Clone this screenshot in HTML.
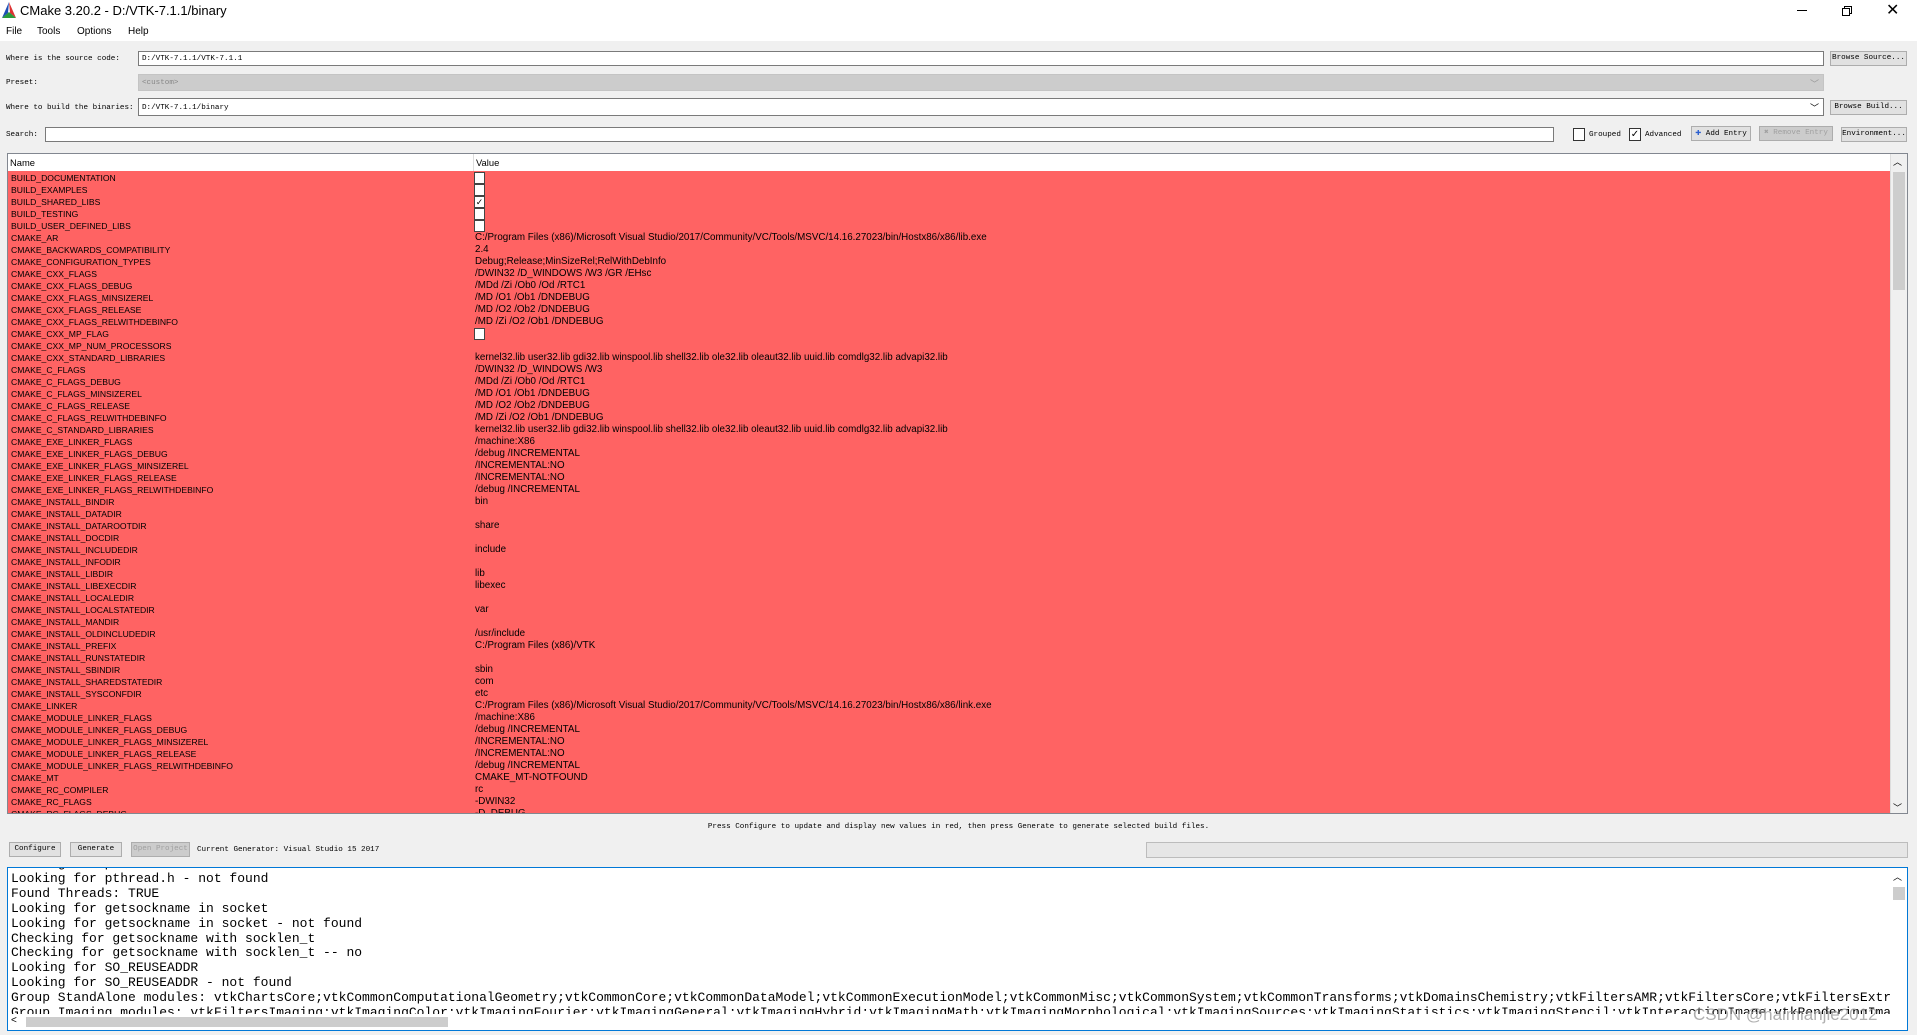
<!DOCTYPE html>
<html><head><meta charset="utf-8">
<style>
*{margin:0;padding:0;box-sizing:border-box}
body{width:1917px;height:1035px;background:#f0f0f0;position:relative;overflow:hidden;font-family:"Liberation Sans",sans-serif}
.a{position:absolute}
.lbl{font-family:"Liberation Mono",monospace;font-size:7.6px;color:#000;white-space:nowrap}
.fld{background:#fff;border:1px solid #7a7a7a}
.btn{background:#e1e1e1;border:1px solid #adadad;font-family:"Liberation Mono",monospace;font-size:7.6px;text-align:center;white-space:nowrap}
.row{position:absolute;left:0;height:12px;font-size:8.6px;line-height:12px;white-space:nowrap;color:#000}
.v{font-size:9.8px}
.cb{position:absolute;width:11px;height:12px;background:#fff;border:1px solid #444}
#tbl{left:7px;top:153px;width:1901px;height:661px;background:#ff6363;border:1px solid #828790;overflow:hidden}
pre{font-family:"Liberation Mono",monospace;font-size:13px;line-height:14.9px;color:#000}
</style></head><body>
<div class="a" style="left:0;top:0;width:1917px;height:41px;background:#fff"></div>
<svg class="a" style="left:2px;top:2px" width="14" height="16" viewBox="0 0 14 16"><polygon points="7,0 0,16 6,11" fill="#1e4fb5"/><polygon points="7,0 14,16 8,11" fill="#d33"/><polygon points="0,16 14,16 7,10" fill="#2a9a3a"/></svg>
<div class="a" style="left:20px;top:3px;font-size:13px">CMake 3.20.2 - D:/VTK-7.1.1/binary</div>
<div class="a" style="left:1797px;top:10px;width:10px;height:1px;background:#000"></div>
<div class="a" style="left:1844px;top:6px;width:8px;height:8px;border:1px solid #000;background:#fff"></div>
<div class="a" style="left:1842px;top:8px;width:8px;height:8px;border:1px solid #000;background:#fff"></div>
<div class="a" style="left:1886px;top:0px;font-size:16px;font-weight:300">✕</div>
<div class="a" style="left:6px;top:26px;font-size:10px">File</div>
<div class="a" style="left:37px;top:26px;font-size:10px">Tools</div>
<div class="a" style="left:77px;top:26px;font-size:10px">Options</div>
<div class="a" style="left:128px;top:26px;font-size:10px">Help</div>

<div class="a lbl" style="left:6px;top:55px">Where is the source code:</div>
<div class="a fld lbl" style="left:138px;top:51px;width:1686px;height:15px;padding:3px 3px">D:/VTK-7.1.1/VTK-7.1.1</div>
<div class="a btn" style="left:1830px;top:51px;width:77px;height:15px;line-height:13px">Browse Source...</div>
<div class="a lbl" style="left:6px;top:79px">Preset:</div>
<div class="a lbl" style="left:138px;top:74px;width:1686px;height:17px;background:#ccc;border:1px solid #c4c4c4;padding:4px 3px;color:#888">&lt;custom&gt;</div>
<div class="a" style="left:1810px;top:77px;color:#999;font-size:9px">﹀</div>
<div class="a lbl" style="left:6px;top:104px">Where to build the binaries:</div>
<div class="a fld lbl" style="left:138px;top:98px;width:1686px;height:18px;padding:5px 3px">D:/VTK-7.1.1/binary</div>
<div class="a" style="left:1810px;top:101px;font-size:9px">﹀</div>
<div class="a btn" style="left:1830px;top:100px;width:77px;height:15px;line-height:13px">Browse Build...</div>
<div class="a lbl" style="left:6px;top:131px">Search:</div>
<div class="a fld" style="left:45px;top:127px;width:1509px;height:15px"></div>
<div class="a" style="left:1573px;top:128px;width:12px;height:13px;border:1px solid #333;background:#fff"></div>
<div class="a lbl" style="left:1589px;top:131px">Grouped</div>
<div class="a" style="left:1629px;top:128px;width:12px;height:13px;border:1px solid #333;background:#fff;font-size:10px;line-height:11px;text-align:center">✓</div>
<div class="a lbl" style="left:1645px;top:131px">Advanced</div>
<div class="a btn" style="left:1691px;top:126px;width:60px;height:15px;line-height:13px"><span style="color:#2b5fd0;font-weight:bold;font-size:10px">✚</span> Add Entry</div>
<div class="a btn" style="left:1759px;top:126px;width:74px;height:15px;line-height:13px;color:#a0a0a0;background:#ccc">✖ Remove Entry</div>
<div class="a btn" style="left:1841px;top:127px;width:66px;height:15px;line-height:13px">Environment...</div>

<div class="a" id="tbl">
<div class="a" style="left:0;top:0;width:1882px;height:17px;background:#fff;font-size:9.4px;line-height:17px"><span style="position:absolute;left:2px">Name</span><span style="position:absolute;left:465px;border-left:1px solid #ddd;padding-left:2px;height:17px">Value</span></div>
<div class="a" style="left:1882px;top:0;width:18px;height:660px;background:#f0f0f0;border-left:1px solid #ddd"></div>
<div class="a" style="left:1885px;top:1px;font-size:9px">︿</div>
<div class="a" style="left:1885px;top:18px;width:12px;height:118px;background:#cdcdcd"></div>
<div class="a" style="left:1885px;top:647px;font-size:9px">﹀</div>
<div id="rows" class="a" style="left:0;top:18px;width:1882px"></div>
</div>

<div class="a lbl" style="left:0;width:1917px;top:823px;text-align:center">Press Configure to update and display new values in red, then press Generate to generate selected build files.</div>
<div class="a btn" style="left:9px;top:842px;width:52px;height:15px;line-height:13px">Configure</div>
<div class="a btn" style="left:70px;top:842px;width:52px;height:15px;line-height:13px">Generate</div>
<div class="a btn" style="left:131px;top:842px;width:59px;height:15px;line-height:13px;color:#a0a0a0;background:#ccc">Open Project</div>
<div class="a lbl" style="left:197px;top:846px">Current Generator: Visual Studio 15 2017</div>
<div class="a" style="left:1146px;top:842px;width:762px;height:16px;background:#e6e6e6;border:1px solid #bcbcbc"></div>

<div class="a" style="left:7px;top:867px;width:1901px;height:164px;background:#fff;border:1px solid #0078d7;overflow:hidden">
<pre class="a" style="left:3px;top:-11px">Looking for pthread.h
Looking for pthread.h - not found
Found Threads: TRUE
Looking for getsockname in socket
Looking for getsockname in socket - not found
Checking for getsockname with socklen_t
Checking for getsockname with socklen_t -- no
Looking for SO_REUSEADDR
Looking for SO_REUSEADDR - not found
Group StandAlone modules: vtkChartsCore;vtkCommonComputationalGeometry;vtkCommonCore;vtkCommonDataModel;vtkCommonExecutionModel;vtkCommonMisc;vtkCommonSystem;vtkCommonTransforms;vtkDomainsChemistry;vtkFiltersAMR;vtkFiltersCore;vtkFiltersExtr
Group Imaging modules: vtkFiltersImaging;vtkImagingColor;vtkImagingFourier;vtkImagingGeneral;vtkImagingHybrid;vtkImagingMath;vtkImagingMorphological;vtkImagingSources;vtkImagingStatistics;vtkImagingStencil;vtkInteractionImage;vtkRenderingImage</pre>
<div class="a" style="left:0;top:146px;width:1899px;height:17px;background:#fff"></div>
<div class="a" style="left:3px;top:147px;font-size:10px">&lt;</div>
<div class="a" style="left:18px;top:149px;width:422px;height:10px;background:#cdcdcd"></div>
<div class="a" style="left:1882px;top:0;width:17px;height:146px;background:#fff"></div>
<div class="a" style="left:1885px;top:2px;font-size:9px">︿</div>
<div class="a" style="left:1885px;top:19px;width:12px;height:13px;background:#cdcdcd"></div>
</div>
<div class="a" style="left:1693px;top:1005px;font-size:17px;color:rgba(150,150,150,.75)">CSDN @haimianjie2012</div>

<script>
var C="C:/Program Files (x86)/Microsoft Visual Studio/2017/Community/VC/Tools/MSVC/14.16.27023/bin/Hostx86/x86/";
var L="kernel32.lib user32.lib gdi32.lib winspool.lib shell32.lib ole32.lib oleaut32.lib uuid.lib comdlg32.lib advapi32.lib";
var d=[["BUILD_DOCUMENTATION",0],["BUILD_EXAMPLES",0],["BUILD_SHARED_LIBS",1],["BUILD_TESTING",0],["BUILD_USER_DEFINED_LIBS",0],
["CMAKE_AR",C+"lib.exe"],["CMAKE_BACKWARDS_COMPATIBILITY","2.4"],["CMAKE_CONFIGURATION_TYPES","Debug;Release;MinSizeRel;RelWithDebInfo"],
["CMAKE_CXX_FLAGS","/DWIN32 /D_WINDOWS /W3 /GR /EHsc"],["CMAKE_CXX_FLAGS_DEBUG","/MDd /Zi /Ob0 /Od /RTC1"],["CMAKE_CXX_FLAGS_MINSIZEREL","/MD /O1 /Ob1 /DNDEBUG"],
["CMAKE_CXX_FLAGS_RELEASE","/MD /O2 /Ob2 /DNDEBUG"],["CMAKE_CXX_FLAGS_RELWITHDEBINFO","/MD /Zi /O2 /Ob1 /DNDEBUG"],["CMAKE_CXX_MP_FLAG",0],
["CMAKE_CXX_MP_NUM_PROCESSORS",""],["CMAKE_CXX_STANDARD_LIBRARIES",L],["CMAKE_C_FLAGS","/DWIN32 /D_WINDOWS /W3"],["CMAKE_C_FLAGS_DEBUG","/MDd /Zi /Ob0 /Od /RTC1"],
["CMAKE_C_FLAGS_MINSIZEREL","/MD /O1 /Ob1 /DNDEBUG"],["CMAKE_C_FLAGS_RELEASE","/MD /O2 /Ob2 /DNDEBUG"],["CMAKE_C_FLAGS_RELWITHDEBINFO","/MD /Zi /O2 /Ob1 /DNDEBUG"],
["CMAKE_C_STANDARD_LIBRARIES",L],["CMAKE_EXE_LINKER_FLAGS","/machine:X86"],["CMAKE_EXE_LINKER_FLAGS_DEBUG","/debug /INCREMENTAL"],
["CMAKE_EXE_LINKER_FLAGS_MINSIZEREL","/INCREMENTAL:NO"],["CMAKE_EXE_LINKER_FLAGS_RELEASE","/INCREMENTAL:NO"],["CMAKE_EXE_LINKER_FLAGS_RELWITHDEBINFO","/debug /INCREMENTAL"],
["CMAKE_INSTALL_BINDIR","bin"],["CMAKE_INSTALL_DATADIR",""],["CMAKE_INSTALL_DATAROOTDIR","share"],["CMAKE_INSTALL_DOCDIR",""],["CMAKE_INSTALL_INCLUDEDIR","include"],
["CMAKE_INSTALL_INFODIR",""],["CMAKE_INSTALL_LIBDIR","lib"],["CMAKE_INSTALL_LIBEXECDIR","libexec"],["CMAKE_INSTALL_LOCALEDIR",""],["CMAKE_INSTALL_LOCALSTATEDIR","var"],
["CMAKE_INSTALL_MANDIR",""],["CMAKE_INSTALL_OLDINCLUDEDIR","/usr/include"],["CMAKE_INSTALL_PREFIX","C:/Program Files (x86)/VTK"],["CMAKE_INSTALL_RUNSTATEDIR",""],
["CMAKE_INSTALL_SBINDIR","sbin"],["CMAKE_INSTALL_SHAREDSTATEDIR","com"],["CMAKE_INSTALL_SYSCONFDIR","etc"],["CMAKE_LINKER",C+"link.exe"],
["CMAKE_MODULE_LINKER_FLAGS","/machine:X86"],["CMAKE_MODULE_LINKER_FLAGS_DEBUG","/debug /INCREMENTAL"],["CMAKE_MODULE_LINKER_FLAGS_MINSIZEREL","/INCREMENTAL:NO"],
["CMAKE_MODULE_LINKER_FLAGS_RELEASE","/INCREMENTAL:NO"],["CMAKE_MODULE_LINKER_FLAGS_RELWITHDEBINFO","/debug /INCREMENTAL"],["CMAKE_MT","CMAKE_MT-NOTFOUND"],
["CMAKE_RC_COMPILER","rc"],["CMAKE_RC_FLAGS","-DWIN32"],["CMAKE_RC_FLAGS_DEBUG","-D_DEBUG"]];
var h="";
d.forEach(function(r,i){var t=i*12;h+='<div class="row" style="top:'+t+'px;left:3px">'+r[0]+'</div>';
if(typeof r[1]=="number"){h+='<div class="cb" style="top:'+t+'px;left:466px;font-size:9px;line-height:10px;text-align:center">'+(r[1]?'✓':'')+'</div>';}
else h+='<div class="row v" style="top:'+t+'px;left:467px">'+r[1]+'</div>';});
document.getElementById("rows").innerHTML=h;
</script>
</body></html>
